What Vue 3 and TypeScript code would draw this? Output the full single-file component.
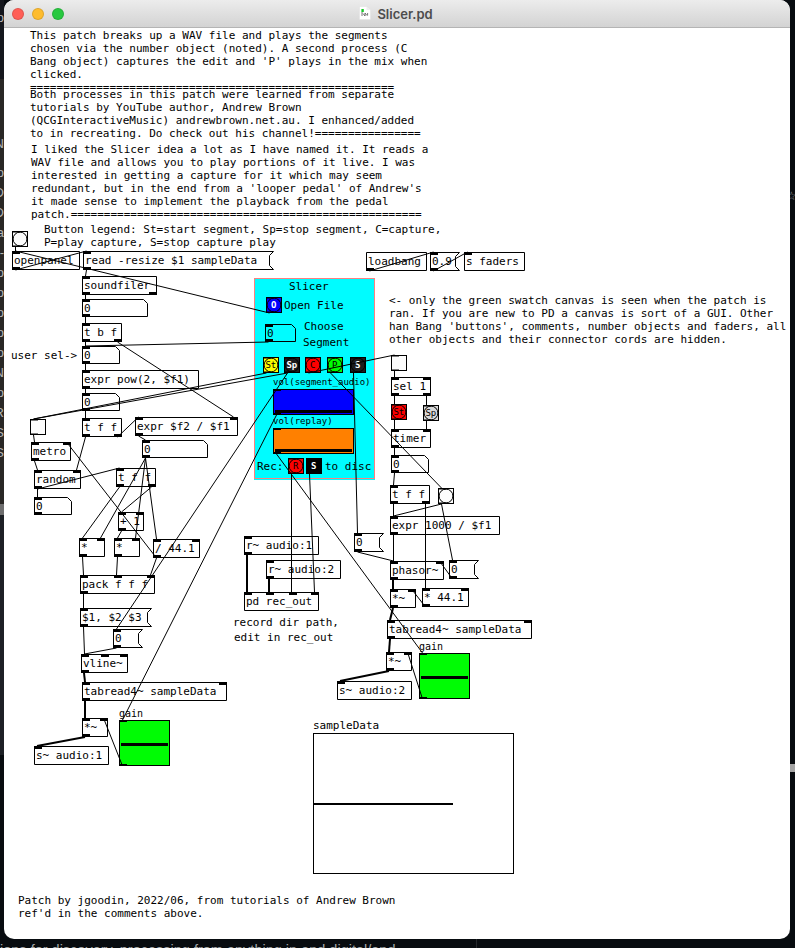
<script setup lang="ts">
type Kind = 'obj' | 'msg' | 'num'

interface PdNode {
  kind: Kind
  l: number
  t: number
  r: number
  text: string
  ins: number
  outs: number
}

interface Bang {
  l: number
  t: number
  fill: string
  label?: string
  color?: string
  shape?: 'bang' | 'toggle'
}

const n = (kind: Kind, l: number, t: number, r: number, text: string, ins = 1, outs = 1): PdNode => ({ kind, l, t, r, text, ins, outs })

const nodes: PdNode[] = [
  n('obj', 12, 251, 80, 'openpanel'),
  n('msg', 83, 251, 274, 'read -resize $1 sampleData'),
  n('obj', 82, 276, 157, 'soundfiler', 1, 2),
  n('num', 82, 299, 148, '0'),
  n('obj', 82, 323, 122, 't b f', 1, 2),
  n('num', 82, 346, 120, '0'),
  n('obj', 82, 370, 199, 'expr pow(2, $f1)'),
  n('num', 82, 393, 120, '0'),
  n('obj', 82, 418, 122, 't f f', 1, 2),
  n('obj', 135, 417, 238, 'expr $f2 / $f1', 2, 1),
  n('num', 142, 440, 208, '0'),
  n('obj', 31, 442, 71, 'metro', 2, 1),
  n('obj', 34, 470, 81, 'random', 2, 1),
  n('num', 34, 497, 72, '0'),
  n('obj', 116, 468, 156, 't f f', 1, 2),
  n('obj', 118, 512, 144, '+ 1', 2, 1),
  n('obj', 79, 538, 105, '*', 2, 1),
  n('obj', 114, 538, 140, '*', 2, 1),
  n('obj', 153, 539, 200, '/ 44.1', 2, 1),
  n('obj', 80, 575, 155, 'pack f f f', 3, 1),
  n('msg', 80, 608, 152, '$1, $2 $3'),
  n('msg', 113, 629, 143, '0'),
  n('obj', 81, 654, 128, 'vline~', 3, 1),
  n('obj', 82, 682, 227, 'tabread4~ sampleData', 2, 1),
  n('obj', 82, 718, 108, '*~', 2, 1),
  n('obj', 34, 746, 109, 's~ audio:1', 1, 0),
  n('num', 265, 324, 296, '0'),
  n('obj', 244, 536, 319, 'r~ audio:1'),
  n('obj', 266, 560, 341, 'r~ audio:2'),
  n('obj', 244, 592, 319, 'pd rec_out', 4, 0),
  n('msg', 354, 533, 384, '0'),
  n('obj', 366, 252, 427, 'loadbang', 0, 1),
  n('msg', 430, 252, 460, '0.9'),
  n('obj', 464, 252, 525, 's faders', 1, 0),
  n('obj', 391, 377, 431, 'sel 1', 2, 2),
  n('obj', 391, 429, 431, 'timer', 2, 1),
  n('num', 391, 455, 429, '0'),
  n('obj', 390, 485, 430, 't f f', 1, 2),
  n('obj', 390, 516, 500, 'expr 1000 / $f1'),
  n('obj', 390, 561, 444, 'phasor~', 2, 1),
  n('msg', 449, 560, 479, '0'),
  n('obj', 390, 589, 416, '*~', 2, 1),
  n('obj', 422, 588, 469, '* 44.1', 2, 1),
  n('obj', 387, 620, 532, 'tabread4~ sampleData', 2, 1),
  n('obj', 386, 652, 412, '*~', 2, 1),
  n('obj', 337, 681, 412, 's~ audio:2', 1, 0),
]

const bangs: Bang[] = [
  { l: 12, t: 231, fill: '#fcfcfc' },
  { l: 30, t: 419, fill: '#fcfcfc', shape: 'toggle' },
  { l: 266, t: 297, fill: '#0000fc', label: 'O', color: '#fff' },
  { l: 263, t: 357, fill: '#fcfc00', label: 'St' },
  { l: 284, t: 357, fill: '#1c1c1c', label: 'Sp', color: '#fff' },
  { l: 305, t: 357, fill: '#fc0000', label: 'C' },
  { l: 327, t: 357, fill: '#00fc00', label: 'P' },
  { l: 350, t: 357, fill: '#1c1c1c', label: 'S', color: '#fff' },
  { l: 288, t: 458, fill: '#fc0000', label: 'R' },
  { l: 306, t: 458, fill: '#000', label: 'S', color: '#fff' },
  { l: 391, t: 355, fill: '#fcfcfc', shape: 'toggle' },
  { l: 391, t: 404, fill: '#fc0000', label: 'St' },
  { l: 423, t: 405, fill: '#d8d8d8', label: 'Sp' },
  { l: 438, t: 488, fill: '#fcfcfc' },
]

const sliders = [
  { l: 273, t: 389, r: 354, b: 415, fill: '#0000ff', knob: 410 },
  { l: 273, t: 428, r: 354, b: 454, fill: '#ff8000', knob: 449 },
  { l: 119, t: 720, r: 170, b: 766, fill: '#00fc04', knob: 743 },
  { l: 419, t: 653, r: 470, b: 699, fill: '#00fc04', knob: 676 },
]

const texts: { x: number; y: number; lines: string[]; size?: number }[] = [
  {
    x: 30, y: 39, lines: [
      'This patch breaks up a WAV file and plays the segments',
      'chosen via the number object (noted). A second process (C',
      "Bang object) captures the edit and 'P' plays in the mix when",
      'clicked.',
      '='.repeat(55),
    ],
  },
  {
    x: 30, y: 98, lines: [
      'Both processes in this patch were learned from separate',
      'tutorials by YouTube author, Andrew Brown',
      '(QCGInteractiveMusic) andrewbrown.net.au. I enhanced/added',
      'to in recreating. Do check out his channel!' + '='.repeat(16),
    ],
  },
  {
    x: 31, y: 153, lines: [
      'I liked the Slicer idea a lot as I have named it. It reads a',
      'WAV file and allows you to play portions of it live. I was',
      'interested in getting a capture for it which may seem',
      "redundant, but in the end from a 'looper pedal' of Andrew's",
      'it made sense to implement the playback from the pedal',
      'patch.' + '='.repeat(53),
    ],
  },
  {
    x: 44, y: 233, lines: [
      'Button legend: St=start segment, Sp=stop segment, C=capture,',
      'P=play capture, S=stop capture play',
    ],
  },
  {
    x: 389, y: 304, lines: [
      '<- only the green swatch canvas is seen when the patch is',
      'ran. If you are new to PD a canvas is sort of a GUI. Other',
      "han Bang 'buttons', comments, number objects and faders, all",
      'other objects and their connector cords are hidden.',
    ],
  },
  {
    x: 18, y: 904, lines: [
      'Patch by jgoodin, 2022/06, from tutorials of Andrew Brown',
      "ref'd in the comments above.",
    ],
  },
  { x: 11, y: 359, lines: ['user sel->'] },
  { x: 289, y: 290, lines: ['Slicer'] },
  { x: 284, y: 309, lines: ['Open File'] },
  { x: 304, y: 330, lines: ['Choose'] },
  { x: 303, y: 346, lines: ['Segment'] },
  { x: 273, y: 385, lines: ['vol(segment_audio)'], size: 9 },
  { x: 273, y: 424, lines: ['vol(replay)'], size: 9 },
  { x: 257, y: 470, lines: ['Rec:'] },
  { x: 325, y: 470, lines: ['to disc'] },
  { x: 233, y: 626, lines: ['record dir path,'] },
  { x: 234, y: 641, lines: ['edit in rec_out'] },
  { x: 119, y: 717, lines: ['gain'], size: 10 },
  { x: 419, y: 650, lines: ['gain'], size: 10 },
  { x: 313, y: 729, lines: ['sampleData'] },
]

const wires: number[][] = [
  [16, 247, 16, 251], [16, 270, 87, 251], [270, 313, 16, 251], [87, 270, 86, 276],
  [86, 295, 86, 299], [86, 317, 86, 323], [86, 342, 86, 346], [118, 342, 234, 417],
  [86, 364, 86, 370], [86, 389, 86, 393], [86, 411, 86, 418], [86, 437, 77, 470],
  [118, 437, 139, 417], [139, 436, 146, 440], [146, 458, 101, 538], [146, 458, 136, 538],
  [146, 458, 157, 539], [120, 487, 83, 538], [152, 487, 122, 512], [157, 558, 67, 442],
  [157, 558, 151, 575], [122, 531, 118, 538], [83, 557, 84, 575], [118, 557, 117, 575],
  [84, 594, 84, 608], [84, 627, 85, 654], [117, 648, 85, 654], [123, 766, 104, 718],
  [277, 415, 123, 720], [288, 373, 117, 629], [269, 342, 86, 346], [267, 373, 34, 419],
  [288, 373, 34, 419], [309, 373, 395, 355], [331, 373, 442, 488], [354, 373, 358, 533],
  [292, 474, 292, 592], [310, 474, 315, 592], [277, 454, 423, 653], [34, 435, 35, 442],
  [35, 461, 38, 470], [38, 489, 38, 497], [38, 489, 120, 468], [395, 371, 395, 377],
  [395, 396, 395, 404], [427, 396, 427, 405], [395, 420, 395, 429], [427, 421, 427, 429],
  [395, 448, 395, 455], [395, 473, 394, 485], [394, 504, 394, 516], [426, 504, 426, 588],
  [442, 504, 394, 516], [442, 504, 453, 560], [394, 535, 394, 561], [358, 552, 394, 561],
  [453, 579, 440, 561], [426, 607, 412, 589], [423, 699, 408, 652], [370, 271, 434, 252],
  [434, 271, 468, 252],
]

const signalWires: number[][] = [
  [85, 673, 86, 682], [86, 701, 86, 718], [86, 737, 38, 746], [248, 555, 248, 592],
  [270, 579, 270, 592], [394, 580, 394, 589], [394, 608, 391, 620], [391, 639, 390, 652],
  [390, 671, 341, 681],
]

const sidebar = ['o', 'D', 'D', 'a', '-', 'o', 'o', 'o', 'o', 'o', 'N', 'o', 'R', 'S', 'S']

const bottom = (d: PdNode): number => d.t + (d.kind === 'num' ? 18 : 19)

function outline(d: PdNode): string {
  const l = d.l + 0.5
  const t = d.t + 0.5
  const r = d.r - 0.5
  const b = bottom(d) - 0.5
  if (d.kind === 'msg') return `M${r} ${t}H${l}V${b}H${r}L${r - 4} ${b - 4}V${t + 4}Z`
  if (d.kind === 'num') return `M${l} ${t}H${r - 4}L${r} ${t + 4}V${b}H${l}Z`
  return `M${l} ${t}H${r}V${b}H${l}Z`
}

function ports(d: PdNode, count: number): number[] {
  const span = d.r - d.l - 8
  return Array.from({ length: count }, (_, i) => d.l + (count > 1 ? Math.round((span * i) / (count - 1)) : 0))
}

const wirePath = (w: number[], shift: number): string => `M${w[0] - shift} ${w[1]}L${w[2] - shift} ${w[3]}`
</script>

<template>
  <div class="desktop">
    <aside class="left-edge">
      <span class="first">o</span>
      <span class="second">N</span>
      <span v-for="(s, i) in sidebar" :key="i">{{ s }}</span>
      <i class="scroll"></i>
    </aside>

    <main class="window">
      <header class="titlebar">
        <div class="lights"><i class="close"></i><i class="minimize"></i><i class="maximize"></i></div>
        <div class="title">
          <svg width="12" height="14" viewBox="0 0 12 14">
            <path d="M.5.5H7.5L11.5 4V13.5H.5Z" fill="#fff" stroke="#e2e2e2" stroke-width=".6" />
            <path d="M7.5.5V4H11.5" fill="#eee" />
            <rect x="2.4" y="3" width="2.4" height="3" fill="#18c828" />
            <path d="M3 6V10M4 7.5L6 10V7L8 9.5M8.6 7V9.5" fill="none" stroke="#555" stroke-width=".8" />
          </svg>
          <span>Slicer.pd</span>
        </div>
      </header>

      <svg class="patch" width="786" height="911" viewBox="4 28 786 911">
        <rect x="254" y="278" width="121" height="202" fill="#00fcff" />
        <rect x="254.5" y="278.5" width="120" height="200" fill="none" stroke="#fc8080" />

        <g v-for="(s, i) in sliders" :key="'s' + i">
          <rect :x="s.l + 0.5" :y="s.t + 0.5" :width="s.r - s.l - 1" :height="s.b - s.t - 1" :fill="s.fill" stroke="#000" />
          <rect :x="s.l + 2" :y="s.knob" :width="s.r - s.l - 4" height="3" />
          <rect :x="s.l" :y="s.t" width="8" height="2" />
          <rect :x="s.l" :y="s.b - 2" width="8" height="2" />
        </g>

        <g v-for="(d, i) in nodes" :key="'n' + i">
          <path :d="outline(d)" fill="none" stroke="#000" />
          <rect v-for="x in ports(d, d.ins)" :key="'i' + x" :x="x" :y="d.t" width="8" height="3" />
          <rect v-for="x in ports(d, d.outs)" :key="'o' + x" :x="x" :y="bottom(d) - 3" width="8" height="3" />
          <text :x="d.l + 2" :y="d.t + 13">{{ d.text }}</text>
        </g>

        <g v-for="(b, i) in bangs" :key="'b' + i">
          <rect :x="b.l + 0.5" :y="b.t + 0.5" width="15" height="15" :fill="b.fill" stroke="#000" />
          <circle v-if="b.shape !== 'toggle'" :cx="b.l + 8" :cy="b.t + 8" r="6.9" fill="none" stroke="#000" />
          <rect :x="b.l" :y="b.t" width="8" height="1.5" />
          <rect :x="b.l" :y="b.t + 14.5" width="8" height="1.5" />
          <text v-if="b.label" class="tag" :class="{ light: b.color }" :x="b.l + 7.8" :y="b.t + 11">{{ b.label }}</text>
        </g>

        <template v-for="(c, i) in texts" :key="'t' + i">
          <text
            v-for="(row, j) in c.lines"
            :key="j"
            :class="{ small: c.size === 9, mid: c.size === 10 }"
            :x="c.x"
            :y="c.y + 13 * j"
          >{{ row }}</text>
        </template>

        <rect x="313.5" y="733.5" width="200" height="140" fill="none" stroke="#000" />
        <rect x="314" y="803" width="139" height="2" />

        <path v-for="(w, i) in wires" :key="'w' + i" class="wire" :d="wirePath(w, 0.5)" />
        <path v-for="(w, i) in signalWires" :key="'g' + i" class="wire signal" :d="wirePath(w, 1)" />
      </svg>
    </main>

    <aside class="right-edge"><span>☆</span><i></i></aside>

    <footer class="below"><span>ions for discovery, processing from anything in and digital/and</span><i></i></footer>
  </div>
</template>

<style>
body {
  margin: 0;
  background: #080c10;
}
</style>

<style scoped>
.desktop {
  width: 795px;
  height: 948px;
  display: grid;
  grid-template: 939px 9px / 4px 786px 5px;
  overflow: hidden;
  background: linear-gradient(#15171d 0 79px, #292725 79px 514px, #1d2025 514px 755px, #080c10 755px) left top / 4px 100% no-repeat, #080c10;
}

.left-edge {
  display: flex;
  flex-direction: column;
  align-items: flex-end;
  overflow: hidden;
  font: 13px/20px "Liberation Sans", sans-serif;
  color: #b4b4b4;
}

.left-edge span {
  flex: none;
  height: 20px;
}

.left-edge .first {
  margin: 8px 0 106px;
}

.left-edge .second {
  height: 29px;
}

.left-edge .scroll {
  width: 4px;
  height: 11px;
  flex: none;
  margin-top: 41px;
  background: #6e6e6e;
}

.window {
  border-radius: 10px;
  overflow: hidden;
  background: #fff;
}

.titlebar {
  height: 28px;
  box-sizing: border-box;
  display: grid;
  grid-template-columns: 1fr auto 1fr;
  align-items: center;
  padding: 0 10px 0 8px;
  background: linear-gradient(#ececec, #d3d3d3);
  border-bottom: 1px solid #b4b4b4;
}

.lights {
  display: flex;
  gap: 8px;
}

.lights i {
  width: 12px;
  height: 12px;
  box-sizing: border-box;
  border-radius: 50%;
  border: 1px solid rgba(0, 0, 0, 0.12);
}

.close { background: #ff5f57; }
.minimize { background: #febc2e; }
.maximize { background: #28c840; }

.title {
  display: flex;
  align-items: center;
  gap: 6px;
  font: 600 13px Inter, "Liberation Sans", sans-serif;
  color: #4c4c4c;
}

.title svg {
  margin-top: -2px;
}

.patch {
  display: block;
}

.patch text {
  font: 11px "DejaVu Sans Mono", monospace;
  white-space: pre;
}

.patch .small { font-size: 9px; }
.patch .mid { font-size: 10px; }

.patch .tag {
  font-size: 9px;
  text-anchor: middle;
}

.patch .light {
  fill: #fff;
  font-weight: bold;
}

.wire {
  fill: none;
  stroke: #000;
  stroke-width: 1;
}

.signal {
  stroke-width: 2;
}

.right-edge {
  display: flex;
  flex-direction: column;
  overflow: hidden;
  padding-top: 186px;
  font: 12px/20px "DejaVu Sans", sans-serif;
  color: #8a8d90;
}

.right-edge span {
  height: 20px;
  margin-left: -4px;
}

.right-edge i {
  height: 8px;
  margin-top: 558px;
  background: #a4a4a4;
}

.below {
  grid-column: 1 / -1;
  display: flex;
  overflow: hidden;
  font: 14.5px/17px "Liberation Sans", sans-serif;
  color: #a6a8aa;
}

.below span {
  width: 476px;
  padding-top: 3px;
  white-space: nowrap;
}

.below i {
  width: 1px;
  background: #26292d;
}
</style>
